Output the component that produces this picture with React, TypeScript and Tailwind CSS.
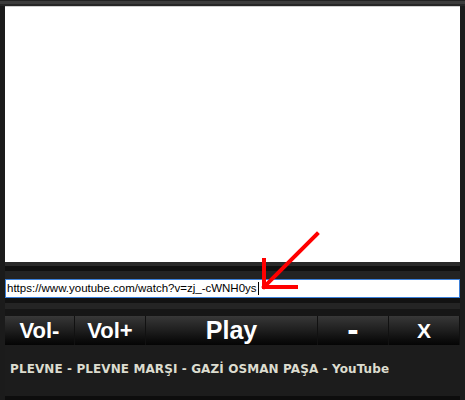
export default function App() {
    const buttons: { label: string, width: string, size: string }[] = [
        { label: "Vol-", width: "w-[70px]", size: "text-[22px]" },
        { label: "Vol+", width: "w-[71px]", size: "text-[22px]" },
        { label: "Play", width: "w-[172px]", size: "text-[25px]" },
        { label: "-", width: "w-[71px]", size: "text-[34px] pb-[4px]" },
        { label: "X", width: "w-[71px]", size: "text-[21px]" },
    ]

    return (
        <div className="relative w-[465px] h-[400px] bg-[#1b1b1b] flex flex-col overflow-hidden">
            {/* top rail */}
            <div className="h-[6px] flex flex-col">
                <div className="h-[1px] bg-[#222]" />
                <div className="h-[3px] bg-[#3c3c3c]" />
                <div className="h-[2px] bg-[#262626]" />
            </div>

            <div className="px-[5px]">
                <div className="h-[256px] bg-white border-t border-[#cfcfcf]" />
            </div>

            {/* band under the player */}
            <div className="h-[17px] flex flex-col px-[5px]">
                <div className="h-[4px] bg-[#2a2a2a]" />
                <div className="h-[5px] bg-[#101010]" />
                <div className="h-[8px] bg-[#232323]" />
            </div>

            <div className="px-[5px]">
                <div className="h-[19px] bg-white border border-[#3b7fd8] flex items-center px-[1px]">
                    <span className="text-[11.5px] text-black leading-none" style={{ fontFamily: "'Liberation Sans', Arial, sans-serif" }}>
                        https://www.youtube.com/watch?v=zj_-cWNH0ys
                    </span>
                    <span className="w-[1px] h-[13px] bg-black ml-[1px]" />
                </div>
            </div>

            <div className="h-[18px] flex flex-col px-[5px]">
                <div className="h-[5px] bg-[#121212]" />
                <div className="h-[6px] bg-[#242424]" />
                <div className="h-[7px] bg-[#161616]" />
            </div>

            <div className="px-[5px] flex h-[29px]">
                {buttons.map((b, i) => (
                    <div
                        key={i}
                        className={`${b.width} h-full flex items-center justify-center border-r border-[#111] bg-gradient-to-b from-[#383838] via-[#1e1e1e] to-[#050505] text-white font-bold ${b.size} leading-none`}
                        style={{ fontFamily: "'Liberation Sans', Arial, sans-serif" }}
                    >
                        {b.label}
                    </div>
                ))}
            </div>

            <div className="px-[5px] flex-1 flex flex-col">
                <div className="flex-1 bg-[#1c1c1c] flex items-center px-[5px] pb-[4px]">
                    <span className="text-[12px] font-bold text-[#dcdccf] tracking-[0.1px]" style={{ fontFamily: "'DejaVu Sans', Verdana, sans-serif" }}>
                        PLEVNE - PLEVNE MARŞI - GAZİ OSMAN PAŞA - YouTube
                    </span>
                </div>
                <div className="h-[4px] bg-[#0d0d0d]" />
            </div>

            {/* red arrow */}
            <svg className="absolute left-0 top-0" width="465" height="400" viewBox="0 0 465 400">
                <g stroke="#ff0000" strokeWidth="4" fill="none" strokeLinecap="square">
                    <line x1="317" y1="234" x2="264" y2="287" />
                    <line x1="264" y1="287" x2="296" y2="287" />
                    <line x1="264" y1="287" x2="264" y2="260" />
                </g>
            </svg>
        </div>
    );
}
